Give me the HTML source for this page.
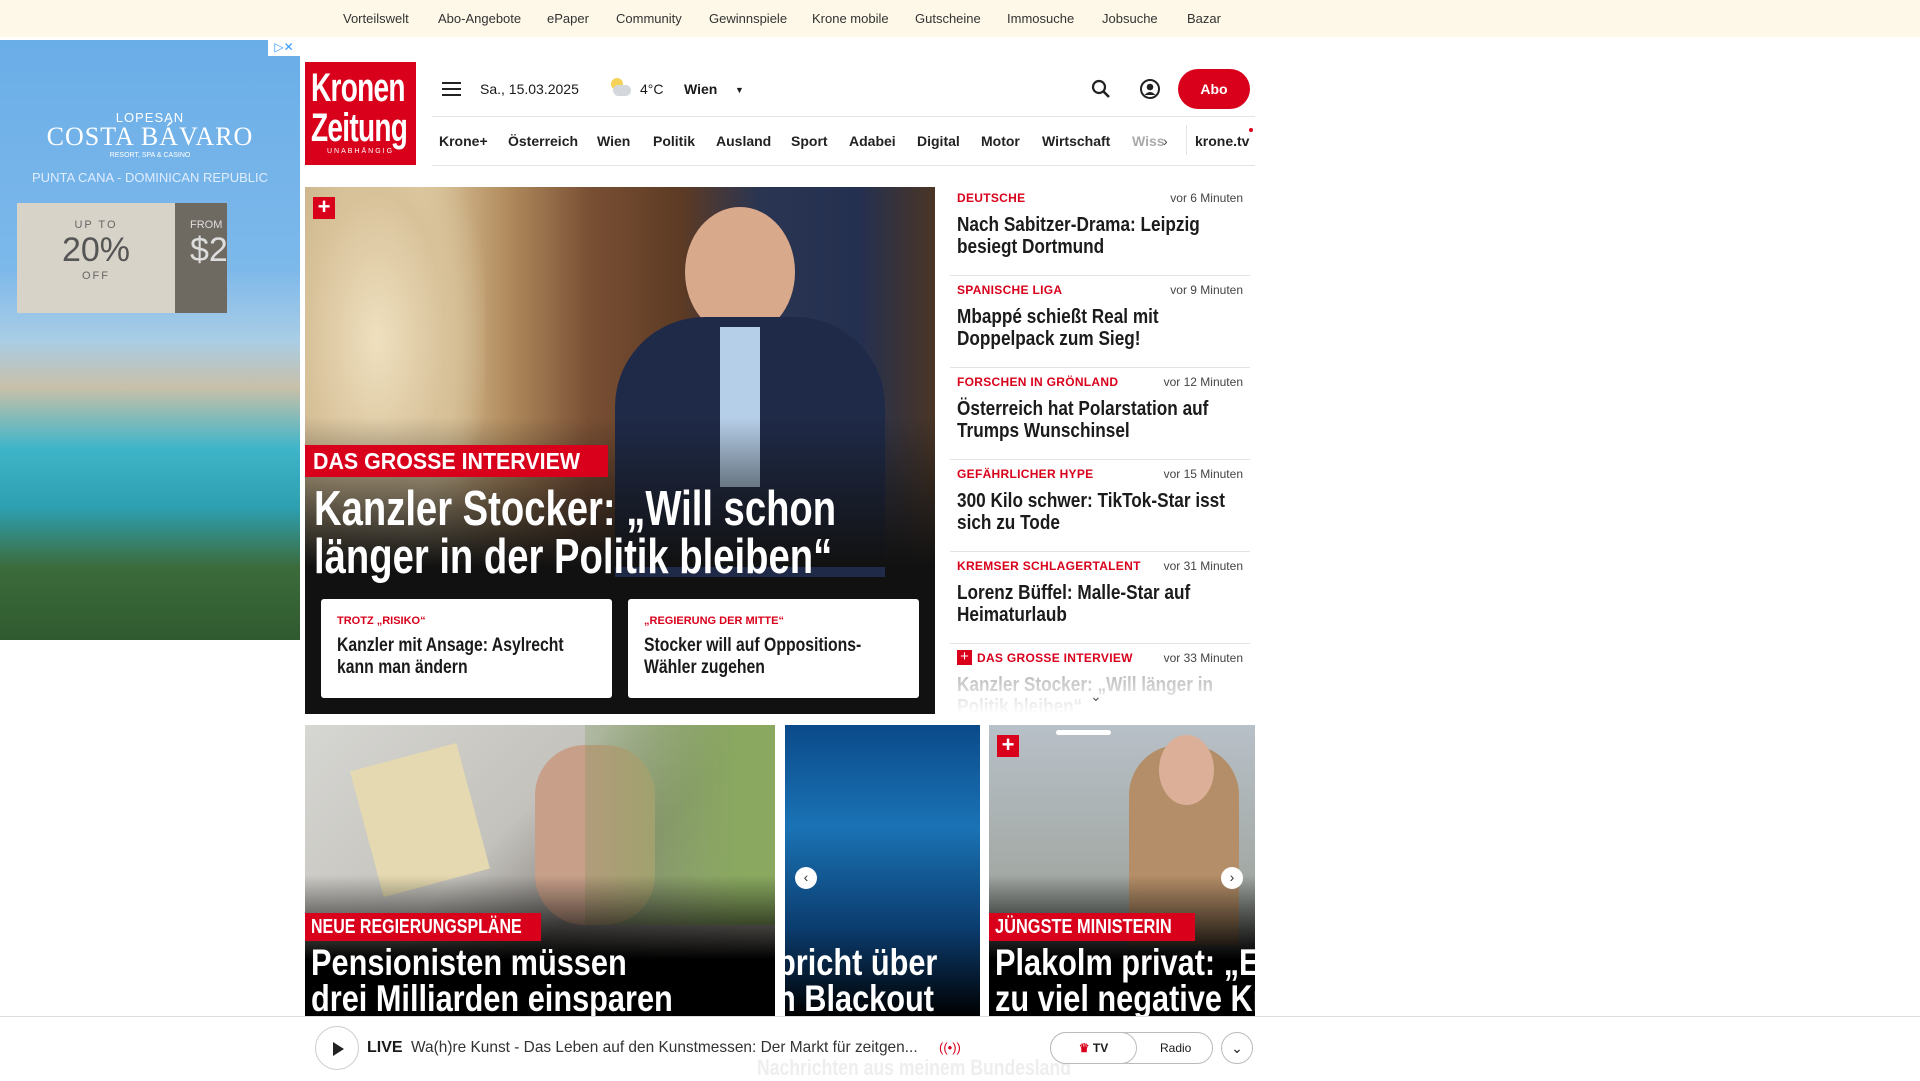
<!DOCTYPE html>
<html><head><meta charset="utf-8">
<style>
*{margin:0;padding:0;box-sizing:border-box}
body{width:1920px;height:1080px;overflow:hidden;background:#fff;font-family:"Liberation Sans",sans-serif;position:relative;color:#1a1a1a}
.abs{position:absolute}
.topbar{left:0;top:0;width:1920px;height:37px;background:#fdf8e8}
.topbar span{position:absolute;top:11px;font-size:13px;color:#333}
.sx{display:block;transform-origin:0 0;white-space:nowrap}
.nav span{position:absolute;top:133px;font-size:14px;font-weight:700;color:#222}
.cat{position:absolute;font-size:12px;font-weight:700;color:#d9001b;letter-spacing:.3px}
.time{position:absolute;font-size:12px;color:#444;right:0}
.ttl{position:absolute;font-size:20px;line-height:22px;font-weight:700;color:#1b1b1b;transform:scaleX(.86);transform-origin:0 0;white-space:nowrap}
.item{position:absolute;left:950px;width:300px;height:92px;border-bottom:1px solid #e2e2e2}
.lbl{position:absolute;background:#d9001b;color:#fff;font-weight:700;padding:0 8px}
.big{position:absolute;color:#fff;font-weight:700;white-space:nowrap;transform-origin:0 0}
</style></head><body>
<div class="abs topbar">
<span style="left:343px">Vorteilswelt</span><span style="left:438px">Abo-Angebote</span><span style="left:547px">ePaper</span><span style="left:616px">Community</span><span style="left:709px">Gewinnspiele</span><span style="left:812px">Krone mobile</span><span style="left:915px">Gutscheine</span><span style="left:1007px">Immosuche</span><span style="left:1102px">Jobsuche</span><span style="left:1187px">Bazar</span>
</div>
<!-- ad -->
<div class="abs" style="left:0;top:40px;width:300px;height:600px;background:linear-gradient(180deg,#6aaee8 0%,#7cb8ea 38%,#a9cde6 50%,#c8c0a8 58%,#3fb5c9 68%,#2d9fb0 78%,#3c6b3a 88%,#2f5a30 100%);overflow:hidden">
<div class="abs" style="left:0;top:70px;width:300px;text-align:center;color:#fff;font-size:13px;letter-spacing:1px">LOPESAN</div>
<div class="abs" style="left:0;top:82px;width:300px;text-align:center;color:#fff;font-family:'Liberation Serif',serif;font-size:26px;letter-spacing:1px">COSTA BÁVARO</div>
<div class="abs" style="left:0;top:112px;width:300px;text-align:center;color:#fff;font-size:7px">RESORT, SPA &amp; CASINO</div>
<div class="abs" style="left:0;top:130px;width:300px;text-align:center;color:#e0ecff;font-size:13px">PUNTA CANA - DOMINICAN REPUBLIC</div>
<div class="abs" style="left:17px;top:163px;width:158px;height:110px;background:#d8d3c9;text-align:center;color:#666">
<div style="font-size:11px;margin-top:16px;letter-spacing:2px">UP TO</div><div style="font-size:34px;color:#555">20%</div><div style="font-size:11px;letter-spacing:2px">OFF</div></div>
<div class="abs" style="left:175px;top:163px;width:52px;height:110px;background:#6e6a62;color:#ddd;overflow:hidden">
<div style="font-size:11px;margin:16px 0 0 15px">FROM</div><div style="font-size:34px;margin-left:15px">$2</div></div>
<div class="abs" style="left:268px;top:0;width:32px;height:16px;background:#fff;color:#39f;font-size:12px;text-align:center">▷✕</div>
</div>
<!-- logo -->
<div class="abs" style="left:305px;top:62px;width:111px;height:103px;background:#d9001b;color:#fff;overflow:hidden">
<div class="sx" style="position:absolute;left:6px;top:6px;font-size:40px;line-height:40px;font-weight:700;letter-spacing:-1px;transform:scaleX(.7)">Kronen<br>Zeitung</div>
<div style="position:absolute;left:0;top:86px;width:111px;text-align:center;font-size:7px;letter-spacing:2px">UNABHÄNGIG</div></div>
<!-- header row -->
<div class="abs" style="left:442px;top:82px;width:19px;height:14px;border-top:2px solid #222;border-bottom:2px solid #222"><div style="margin-top:4px;height:2px;background:#222"></div></div>
<div class="abs" style="left:480px;top:81px;font-size:14px">Sa., 15.03.2025</div>
<div class="abs" style="left:609px;top:78px;width:22px;height:20px"><div style="position:absolute;left:2px;top:0;width:12px;height:12px;border-radius:50%;background:#f5d25a"></div><div style="position:absolute;left:4px;top:7px;width:18px;height:11px;border-radius:6px;background:#d4d8dc"></div></div>
<div class="abs" style="left:640px;top:81px;font-size:14px">4°C</div>
<div class="abs" style="left:684px;top:81px;font-size:14px;font-weight:700">Wien</div>
<div class="abs" style="left:735px;top:85px;font-size:9px">▼</div>
<svg class="abs" style="left:1091px;top:79px" width="20" height="20" viewBox="0 0 20 20"><circle cx="8" cy="8" r="6" fill="none" stroke="#222" stroke-width="2.2"/><path d="M12.5 12.5 L18 18" stroke="#222" stroke-width="2.6"/></svg>
<svg class="abs" style="left:1139px;top:78px" width="22" height="22" viewBox="0 0 22 22"><circle cx="11" cy="11" r="9" fill="none" stroke="#222" stroke-width="2"/><circle cx="11" cy="9" r="3.3" fill="#222"/><path d="M5.5 17 Q11 11 16.5 17" fill="#222"/></svg>
<div class="abs" style="left:1178px;top:69px;width:72px;height:40px;border-radius:20px;background:#d9001b;color:#fff;font-size:14px;font-weight:700;text-align:center;line-height:40px">Abo</div>
<div class="abs" style="left:432px;top:116px;width:823px;height:1px;background:#e4e4e4"></div>
<div class="abs" style="left:432px;top:165px;width:823px;height:1px;background:#e4e4e4"></div>
<div class="nav">
<span style="left:439px">Krone+</span><span style="left:508px">Österreich</span><span style="left:597px">Wien</span><span style="left:653px">Politik</span><span style="left:716px">Ausland</span><span style="left:791px">Sport</span><span style="left:849px">Adabei</span><span style="left:917px">Digital</span><span style="left:981px">Motor</span><span style="left:1042px">Wirtschaft</span><span style="left:1132px;color:#aaa">Wiss</span><span style="left:1163px;color:#444;font-weight:400">›</span><span style="left:1195px">krone.tv</span>
</div>
<div class="abs" style="left:1186px;top:125px;width:1px;height:30px;background:#e4e4e4"></div>
<div class="abs" style="left:1249px;top:128px;width:4px;height:4px;border-radius:50%;background:#d9001b"></div>
<!-- hero -->
<div class="abs" style="left:305px;top:187px;width:630px;height:527px;overflow:hidden;background:#111">
<div class="abs" style="left:0;top:0;width:630px;height:380px;background:linear-gradient(90deg,#c9b28a 0%,#e2cfa6 18%,#b28c5e 32%,#7a5034 45%,#5c3a24 60%,#2a3552 72%,#243050 88%,#4a3525 100%)"></div>
<div class="abs" style="left:380px;top:20px;width:110px;height:130px;border-radius:50%;background:#d9a98c"></div>
<div class="abs" style="left:310px;top:130px;width:270px;height:260px;border-radius:90px 90px 0 0;background:#1f2a48"></div>
<div class="abs" style="left:415px;top:140px;width:40px;height:160px;background:#b6cfe8"></div>
<div class="abs" style="left:0;top:0;width:180px;height:380px;background:radial-gradient(ellipse at 40% 40%,#efe0bf 0%,#d8c29a 45%,rgba(0,0,0,0) 75%)"></div>
<div class="abs" style="left:0;top:230px;width:630px;height:150px;background:linear-gradient(180deg,rgba(17,17,17,0),#111)"></div>
<div class="abs" style="left:8px;top:10px;width:22px;height:22px;background:#d9001b;color:#fff;font-size:22px;line-height:20px;text-align:center;font-weight:700">+</div>
<div class="lbl" style="left:0;top:258px;height:32px;width:303px;font-size:23px;line-height:32px"><span class="sx" style="transform:scaleX(.93)">DAS GROSSE INTERVIEW</span></div>
<div class="big" style="left:9px;top:298px;font-size:49px;line-height:48px;transform:scaleX(.78)">Kanzler Stocker: „Will schon<br>länger in der Politik bleiben“</div>
<div class="abs" style="left:16px;top:412px;width:291px;height:99px;background:#fff;border-radius:3px;padding:16px 16px">
<div style="font-size:11px;color:#d9001b;font-weight:700">TROTZ „RISIKO“</div><div class="sx" style="font-size:19px;line-height:22px;margin-top:8px;font-weight:700;transform:scaleX(.83)">Kanzler mit Ansage: Asylrecht<br>kann man ändern</div></div>
<div class="abs" style="left:323px;top:412px;width:291px;height:99px;background:#fff;border-radius:3px;padding:16px 16px">
<div style="font-size:11px;color:#d9001b;font-weight:700">„REGIERUNG DER MITTE“</div><div class="sx" style="font-size:19px;line-height:22px;margin-top:8px;font-weight:700;transform:scaleX(.83)">Stocker will auf Oppositions-<br>Wähler zugehen</div></div>
</div>
<!-- list -->
<div class="item" style="top:184px"><div class="cat" style="left:7px;top:7px">DEUTSCHE</div><div class="time" style="top:7px;right:7px">vor 6 Minuten</div><div class="ttl" style="left:7px;top:30px">Nach Sabitzer-Drama: Leipzig<br>besiegt Dortmund</div></div>
<div class="item" style="top:276px"><div class="cat" style="left:7px;top:7px">SPANISCHE LIGA</div><div class="time" style="top:7px;right:7px">vor 9 Minuten</div><div class="ttl" style="left:7px;top:30px">Mbappé schießt Real mit<br>Doppelpack zum Sieg!</div></div>
<div class="item" style="top:368px"><div class="cat" style="left:7px;top:7px">FORSCHEN IN GRÖNLAND</div><div class="time" style="top:7px;right:7px">vor 12 Minuten</div><div class="ttl" style="left:7px;top:30px">Österreich hat Polarstation auf<br>Trumps Wunschinsel</div></div>
<div class="item" style="top:460px"><div class="cat" style="left:7px;top:7px">GEFÄHRLICHER HYPE</div><div class="time" style="top:7px;right:7px">vor 15 Minuten</div><div class="ttl" style="left:7px;top:30px">300 Kilo schwer: TikTok-Star isst<br>sich zu Tode</div></div>
<div class="item" style="top:552px"><div class="cat" style="left:7px;top:7px">KREMSER SCHLAGERTALENT</div><div class="time" style="top:7px;right:7px">vor 31 Minuten</div><div class="ttl" style="left:7px;top:30px">Lorenz Büffel: Malle-Star auf<br>Heimaturlaub</div></div>
<div class="item" style="top:644px;border:none;height:70px;overflow:hidden"><div class="abs" style="left:7px;top:6px;width:15px;height:15px;background:#d9001b;color:#fff;font-size:15px;line-height:14px;text-align:center">+</div><div class="cat" style="left:27px;top:7px">DAS GROSSE INTERVIEW</div><div class="time" style="top:7px;right:7px">vor 33 Minuten</div><div class="ttl" style="left:7px;top:30px;color:#aaa">Kanzler Stocker: „Will länger in<br>Politik bleiben“</div><div class="abs" style="left:0;top:30px;width:300px;height:40px;background:linear-gradient(180deg,rgba(255,255,255,.2),#fff)"></div><div class="abs" style="left:140px;top:44px;font-size:14px;color:#555">⌄</div></div>
<!-- bottom row -->
<div class="abs" style="left:305px;top:725px;width:470px;height:291px;overflow:hidden;background:linear-gradient(135deg,#d6d6d2 0%,#c4c2bc 40%,#8a8682 60%,#b7b1a6 100%)">
<div class="abs" style="left:60px;top:30px;width:110px;height:130px;background:#e4d9b0;transform:rotate(-15deg)"></div>
<div class="abs" style="left:230px;top:20px;width:120px;height:180px;border-radius:50px;background:#c8a08a"></div>
<div class="abs" style="left:280px;top:0;width:190px;height:200px;background:linear-gradient(90deg,rgba(90,140,60,.2),#8aa860 80%)"></div>
<div class="abs" style="left:0;top:150px;width:470px;height:141px;background:linear-gradient(180deg,rgba(0,0,0,0),#000 60%)"></div>
<div class="lbl" style="left:0;top:188px;height:28px;width:236px;font-size:20px;line-height:28px;padding:0 6px"><span class="sx" style="transform:scaleX(.8)">NEUE REGIERUNGSPLÄNE</span></div>
<div class="big" style="left:6px;top:220px;font-size:37px;line-height:36px;transform:scaleX(.83)">Pensionisten müssen<br>drei Milliarden einsparen</div>
</div>
<div class="abs" style="left:785px;top:725px;width:195px;height:291px;overflow:hidden;background:linear-gradient(180deg,#0b4a8a 0%,#1a73b5 35%,#0b3c6e 70%,#000 100%)">
<div class="big" style="left:-8px;top:220px;font-size:37px;line-height:36px;transform:scaleX(.83)">pricht über<br>n Blackout</div>
<div class="abs" style="left:10px;top:142px;width:22px;height:22px;border-radius:50%;background:#fff;text-align:center;font-size:14px;line-height:21px;color:#333">‹</div>
</div>
<div class="abs" style="left:989px;top:725px;width:266px;height:291px;overflow:hidden;background:linear-gradient(180deg,#b8c0c8 0%,#a4aaa6 50%,#6c7068 100%)">
<div class="abs" style="left:140px;top:20px;width:110px;height:200px;border-radius:50px 50px 0 0;background:#b48e68"></div>
<div class="abs" style="left:170px;top:10px;width:55px;height:70px;border-radius:50%;background:#dcb098"></div>
<div class="abs" style="left:0;top:150px;width:266px;height:141px;background:linear-gradient(180deg,rgba(0,0,0,0),#000 60%)"></div>
<div class="abs" style="left:8px;top:10px;width:22px;height:22px;background:#d9001b;color:#fff;font-size:22px;line-height:20px;text-align:center;font-weight:700">+</div>
<div class="abs" style="left:67px;top:5px;width:55px;height:5px;border-radius:3px;background:#fff"></div>
<div class="lbl" style="left:0;top:188px;height:28px;width:206px;font-size:20px;line-height:28px;padding:0 6px"><span class="sx" style="transform:scaleX(.82)">JÜNGSTE MINISTERIN</span></div>
<div class="big" style="left:6px;top:220px;font-size:37px;line-height:36px;transform:scaleX(.83)">Plakolm privat: „Es gibt<br>zu viel negative Kritik“</div>
<div class="abs" style="left:232px;top:142px;width:22px;height:22px;border-radius:50%;background:#fff;text-align:center;font-size:14px;line-height:21px;color:#333">›</div>
</div>
<!-- bottom bar -->
<div class="abs" style="left:0;top:1016px;width:1920px;height:64px;background:#fff;border-top:1px solid #ddd"></div>
<div class="abs" style="left:757px;top:1055px;font-size:22px;font-weight:700;color:#eee;transform:scaleX(.8);transform-origin:0 0;white-space:nowrap">Nachrichten aus meinem Bundesland</div>
<div class="abs" style="left:315px;top:1026px;width:44px;height:44px;border-radius:50%;border:1px solid #ccc;background:#fff"><div style="position:absolute;left:17px;top:15px;border-left:11px solid #222;border-top:7px solid transparent;border-bottom:7px solid transparent"></div></div>
<div class="abs" style="left:367px;top:1039px;font-size:16px;font-weight:700">LIVE</div>
<div class="abs" style="left:411px;top:1039px;font-size:16px;color:#333;transform:scaleX(.965);transform-origin:0 0;white-space:nowrap">Wa(h)re Kunst - Das Leben auf den Kunstmessen: Der Markt für zeitgen...</div>
<div class="abs" style="left:939px;top:1040px;font-size:13px;color:#d9001b">((•))</div>
<div class="abs" style="left:1050px;top:1032px;width:163px;height:32px;border-radius:16px;border:1px solid #bbb"></div>
<div class="abs" style="left:1050px;top:1032px;width:87px;height:32px;border-radius:16px;border:1px solid #bbb;background:#fff;font-size:12px;font-weight:700;text-align:center;line-height:30px"><span style="color:#d9001b">♛</span> TV</div>
<div class="abs" style="left:1160px;top:1041px;font-size:12px">Radio</div>
<div class="abs" style="left:1221px;top:1032px;width:32px;height:32px;border-radius:50%;border:1px solid #bbb;text-align:center;font-size:14px;line-height:30px">⌄</div>
</body></html>
